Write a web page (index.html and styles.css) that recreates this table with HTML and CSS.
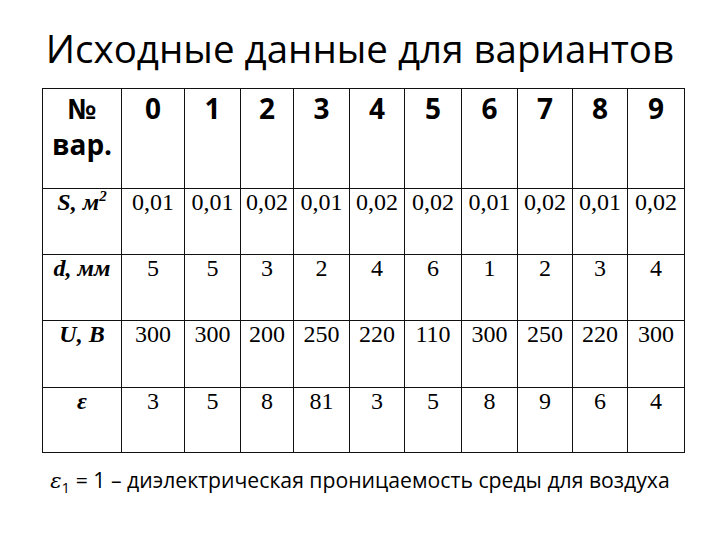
FILE: index.html
```html
<!DOCTYPE html>
<html lang="ru">
<head>
<meta charset="utf-8">
<title>Исходные данные для вариантов</title>
<link rel="stylesheet" href="styles.css">
</head>
<body>
<h1 class="title">Исходные данные для вариантов</h1>
<table class="data">
  <colgroup>
    <col class="c-label">
    <col class="c0"><col class="c1"><col class="c2"><col class="c3"><col class="c4">
    <col class="c5"><col class="c6"><col class="c7"><col class="c8"><col class="c9">
  </colgroup>
  <tr class="head">
    <th>№<br>вар.</th>
    <th>0</th><th>1</th><th>2</th><th>3</th><th>4</th><th>5</th><th>6</th><th>7</th><th>8</th><th>9</th>
  </tr>
  <tr class="row r-s">
    <td class="lbl">S, м<sup>2</sup></td>
    <td>0,01</td><td>0,01</td><td>0,02</td><td>0,01</td><td>0,02</td><td>0,02</td><td>0,01</td><td>0,02</td><td>0,01</td><td>0,02</td>
  </tr>
  <tr class="row r-d">
    <td class="lbl">d, мм</td>
    <td>5</td><td>5</td><td>3</td><td>2</td><td>4</td><td>6</td><td>1</td><td>2</td><td>3</td><td>4</td>
  </tr>
  <tr class="row r-u">
    <td class="lbl">U, В</td>
    <td>300</td><td>300</td><td>200</td><td>250</td><td>220</td><td>110</td><td>300</td><td>250</td><td>220</td><td>300</td>
  </tr>
  <tr class="row r-e">
    <td class="lbl">ε</td>
    <td>3</td><td>5</td><td>8</td><td>81</td><td>3</td><td>5</td><td>8</td><td>9</td><td>6</td><td>4</td>
  </tr>
</table>
<p class="note"><span class="eps">ε<sub>1</sub></span> = 1 – диэлектрическая проницаемость среды для воздуха</p>
</body>
</html>
```
FILE: styles.css
```css
html, body {
  margin: 0;
  padding: 0;
  background: #fff;
  color: #000;
}
body {
  width: 720px;
  height: 540px;
  overflow: hidden;
}
.title {
  margin: 0;
  padding-top: 22px;
  height: 66px;
  font-family: "Open Sans", sans-serif;
  font-weight: 400;
  font-size: 38.5px;
  line-height: 52px;
  text-align: center;
  white-space: nowrap;
}
.data {
  margin-left: 42px;
  width: 643px;
  table-layout: fixed;
  border-collapse: collapse;
}
.c-label { width: 79px; }
.c0 { width: 63px; }
.c1 { width: 56px; }
.c2 { width: 53px; }
.c3 { width: 56px; }
.c4 { width: 55px; }
.c5 { width: 57px; }
.c6 { width: 56px; }
.c7 { width: 55px; }
.c8 { width: 55px; }
.c9 { width: 57px; }
.data th, .data td {
  border: 1px solid #111;
  padding: 0;
  vertical-align: top;
  text-align: center;
  white-space: nowrap;
}
.head th {
  height: 98px;
  padding-top: 1px;
  font-family: "Open Sans", sans-serif;
  font-weight: 700;
  font-size: 28px;
  line-height: 36px;
}
.row td {
  font-family: "Liberation Serif", serif;
  font-size: 24px;
  line-height: 27px;
}
.r-s td, .r-d td { height: 65px; }
.r-u td { height: 66px; }
.r-e td { height: 64px; }
.row td.lbl {
  font-weight: 700;
  font-style: italic;
}
.lbl sup {
  font-size: 15px;
  line-height: 0;
  vertical-align: 9px;
}
.note {
  margin: 13px 0 0;
  font-family: "Open Sans", sans-serif;
  font-size: 21.2px;
  line-height: 28px;
  text-align: center;
  white-space: nowrap;
}
.eps {
  font-family: "DejaVu Serif", serif;
  font-style: italic;
}
.eps sub {
  font-family: "Open Sans", sans-serif;
  font-style: normal;
  font-size: 15px;
  line-height: 0;
  vertical-align: -5px;
}
```
